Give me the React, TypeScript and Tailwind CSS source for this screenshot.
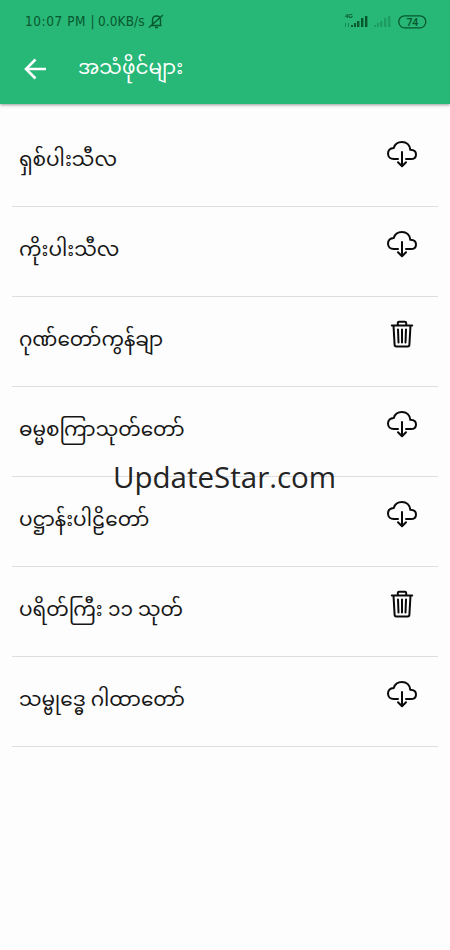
import React from 'react'

interface AudioRowProps {
    title: string;
    downloaded?: boolean;
}

const files: AudioRowProps[] = [
    { title: 'ရှစ်ပါးသီလ' },
    { title: 'ကိုးပါးသီလ' },
    { title: 'ဂုဏ်တော်ကွန်ချာ', downloaded: true },
    { title: 'ဓမ္မစကြာသုတ်တော်' },
    { title: 'ပဋ္ဌာန်းပါဠိတော်' },
    { title: 'ပရိတ်ကြီး ၁၁ သုတ်', downloaded: true },
    { title: 'သမ္ဗုဒ္ဓေ ဂါထာတော်' },
]

function StatusBar() {
  return (
    <div className="flex h-[42px] items-center justify-between pl-[25px] pr-[22px] text-[#07582f]">
      <div className="flex items-center">
        <div className="flex w-[121px] whitespace-nowrap font-['DejaVu_Sans_Condensed','DejaVu_Sans',sans-serif] text-[13.5px]">
          <span className="w-[73px] tracking-[0.55px]">10:07 PM |</span>
          <span className="tracking-[0.1px]">0.0KB/s</span>
        </div>
        <svg width="16" height="16" viewBox="0 0 16 16" fill="none" stroke="currentColor" strokeWidth="1.4" className="ml-[2px]">
          <path d="M2.5 12.5h11M4.5 12V7q0-4 4-4t4 4v5M7 14.5h3M1 14.5L15 2" />
        </svg>
      </div>
      <svg width="84" height="18" viewBox="0 0 84 18">
        <text x="1" y="6" fontSize="6" fontFamily="Liberation Sans" fontWeight="bold" fill="currentColor">4G</text>
        <g fill="currentColor">
          <path d="M7 13h2v2H7zM10 11h2v4h-2zM13 9h2.4v6H13zM17 6h2.4v9H17zM21 4h2.4v11H21z" />
          <path d="M1 11h1v4H1zM4 11h1v4H4z" opacity=".5" />
          <path d="M30 13h2v2h-2zM33 11h2v4h-2zM36 9h2.4v6H36zM40 6h2.4v9H40zM44 4h2.4v11H44z" opacity=".28" />
        </g>
        <rect x="54.8" y="3.8" width="27" height="12" rx="5.8" fill="none" stroke="currentColor" strokeWidth="1.3" />
        <text x="62.5" y="13.5" fontSize="10.5" fontFamily="Noto Sans" fontWeight="600" letterSpacing="-0.3" fill="currentColor">74</text>
      </svg>
    </div>
  )
}

function CloudIcon() {
  return (
    <svg width="32" height="32" viewBox="0 0 32 32" fill="none" stroke="#0a0a0a" strokeWidth="2" strokeLinecap="round" strokeLinejoin="round">
      <path d="M12 22H7.8C4.300 22 2 19.700 2 16.500c0-3.200 2.200-5.300 5.800-5.600C8.800 7.200 12.200 5 16 5c4.400 0 7.800 3 8.300 7.800 3.600.1 5.700 2 5.700 4.600 0 2.900-2.200 4.600-5.200 4.600H20" />
      <path d="M16 15v14M12 25.300l4 4 4-4" />
    </svg>
  )
}

function TrashIcon() {
  return (
    <svg width="32" height="32" viewBox="0 0 32 32" fill="none" stroke="#0a0a0a" strokeWidth="2" strokeLinecap="round" strokeLinejoin="round">
      <path d="M5.800 8.500h20.400M7.500 8.500l1.100 19.300q.1 1.700 1.700 1.700h11.400q1.600 0 1.700-1.700l1.100-19.300M11.800 8V6q0-1.300 1.300-1.300h5.800q1.300 0 1.300 1.300v2" />
      <path d="M12 12.500l.5 13M16 12.500v13M20 12.500l-.5 13" />
    </svg>
  )
}

function AudioRow({ title, downloaded }: AudioRowProps) {
  return (
    <li className="flex h-[90px] items-start justify-between border-b border-[#dedede] pl-[7px] pr-5">
      <span className="mt-[25px] whitespace-nowrap text-[20px] leading-10 text-[#161616]">{title}</span>
      <span className="mt-5">{downloaded ? <TrashIcon /> : <CloudIcon />}</span>
    </li>
  )
}

function App() {
  return (
    <div className="relative h-[950px] w-[450px] overflow-hidden bg-[#fdfdfd] font-['Noto_Sans_Myanmar','Padauk','Noto_Sans',sans-serif]">
      <header className="h-[104px] bg-[#27b776] shadow-[0_1px_3px_rgba(0,0,0,0.4)]">
        <StatusBar />
        <div className="flex items-start pl-6">
          <svg width="22" height="22" viewBox="0 0 22 22" fill="none" stroke="white" strokeWidth="2.6" className="mt-4">
            <path d="M22 11H2M11.5 1.5L2 11l9.5 9.5" />
          </svg>
          <h1 className="ml-8 mt-2 whitespace-nowrap text-[20px] leading-10 text-white">အသံဖိုင်များ</h1>
        </div>
      </header>
      <ul className="mx-3 mt-[13px]">
        {files.map((file) => (
          <AudioRow key={file.title} {...file} />
        ))}
      </ul>
      <div className="absolute left-[113px] top-[457px] whitespace-nowrap font-['Open_Sans','Noto_Sans',sans-serif] text-[29.5px] leading-10 text-[#242424]">
        UpdateStar.com
      </div>
    </div>
  )
}

export default App
